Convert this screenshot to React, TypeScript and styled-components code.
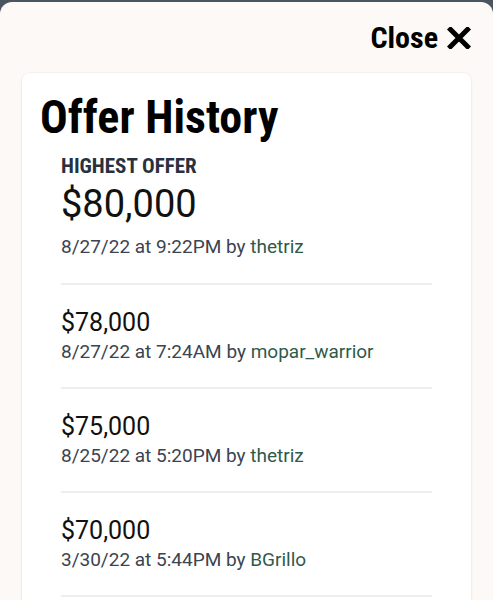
import React from "react";
import styled, { createGlobalStyle } from "styled-components";

const Global = createGlobalStyle`
  html, body { margin: 0; padding: 0; background: #4b5561; }
  body { font-family: Roboto, "Liberation Sans", Arial, sans-serif; }
  * { box-sizing: border-box; }
`;

const Sheet = styled.div`
  margin-top: 2px;
  height: 598px;
  background: #fdf9f6;
  border-radius: 12px 12px 0 0;
  padding: 20px 22px 0 22px;
  overflow: hidden;
`;

const TopBar = styled.div`
  display: flex;
  justify-content: flex-end;
  height: 51px;
`;

const CloseButton = styled.button`
  display: flex;
  align-items: center;
  gap: 9px;
  background: none;
  border: none;
  padding: 0;
  font-family: Roboto, "Liberation Sans", sans-serif;
  font-stretch: condensed;
  font-weight: 700;
  font-size: 30px;
  line-height: 32px;
  color: #000;
  height: 32px;
  cursor: pointer;
`;

const Card = styled.div`
  background: #ffffff;
  border-radius: 8px;
  box-shadow: 0 0 0 1px rgba(0, 0, 0, 0.025), 0 1px 4px rgba(0, 0, 0, 0.05);
  padding: 18px 39px 0 18px;
  height: 560px;
`;

const Title = styled.h1`
  margin: 0;
  font-family: Roboto, "Liberation Sans", sans-serif;
  font-stretch: condensed;
  font-weight: 700;
  font-size: 46px;
  line-height: 52px;
  color: #000;
`;

const List = styled.div`
  padding-left: 21px;
  display: flex;
  flex-direction: column;
`;

const Label = styled.div`
  font-stretch: condensed;
  font-weight: 700;
  font-size: 21px;
  line-height: 24px;
  color: #28313d;
  margin-top: 11px;
`;

const Entry = styled.div<{ $top?: boolean }>`
  border-bottom: 2px solid #eceef2;
  padding: ${(p) => (p.$top ? "0 0 24px" : "23px 0 23px")};
`;

const Amount = styled.div<{ $big?: boolean }>`
  font-size: ${(p) => (p.$big ? "38px" : "25px")};
  line-height: ${(p) => (p.$big ? "44px" : "30px")};
  color: #111111;
  margin-top: ${(p) => (p.$big ? "4px" : "0")};
`;

const Meta = styled.div<{ $big?: boolean }>`
  font-size: 19px;
  line-height: 24px;
  color: #3b4450;
  margin-top: ${(p) => (p.$big ? "9px" : "2px")};
`;

const User = styled.span`
  color: #2f5a4a;
`;

const offers = [
  { amount: "$80,000", date: "8/27/22 at 9:22PM", user: "thetriz" },
  { amount: "$78,000", date: "8/27/22 at 7:24AM", user: "mopar_warrior" },
  { amount: "$75,000", date: "8/25/22 at 5:20PM", user: "thetriz" },
  { amount: "$70,000", date: "3/30/22 at 5:44PM", user: "BGrillo" },
];

export default function App() {
  return (
    <>
      <Global />
      <Sheet>
        <TopBar>
          <CloseButton>
            Close
            <svg width="24" height="22" viewBox="0 0 24 22">
              <path d="M3.5 2.5 L20.5 19.5 M20.5 2.5 L3.5 19.5" stroke="#000" strokeWidth="5" strokeLinecap="square" />
            </svg>
          </CloseButton>
        </TopBar>
        <Card>
          <Title>Offer History</Title>
          <List>
            {offers.map((o, i) => (
              <Entry key={i} $top={i === 0}>
                {i === 0 && <Label>HIGHEST OFFER</Label>}
                <Amount $big={i === 0}>{o.amount}</Amount>
                <Meta $big={i === 0}>
                  {o.date} by <User>{o.user}</User>
                </Meta>
              </Entry>
            ))}
          </List>
        </Card>
      </Sheet>
    </>
  );
}
